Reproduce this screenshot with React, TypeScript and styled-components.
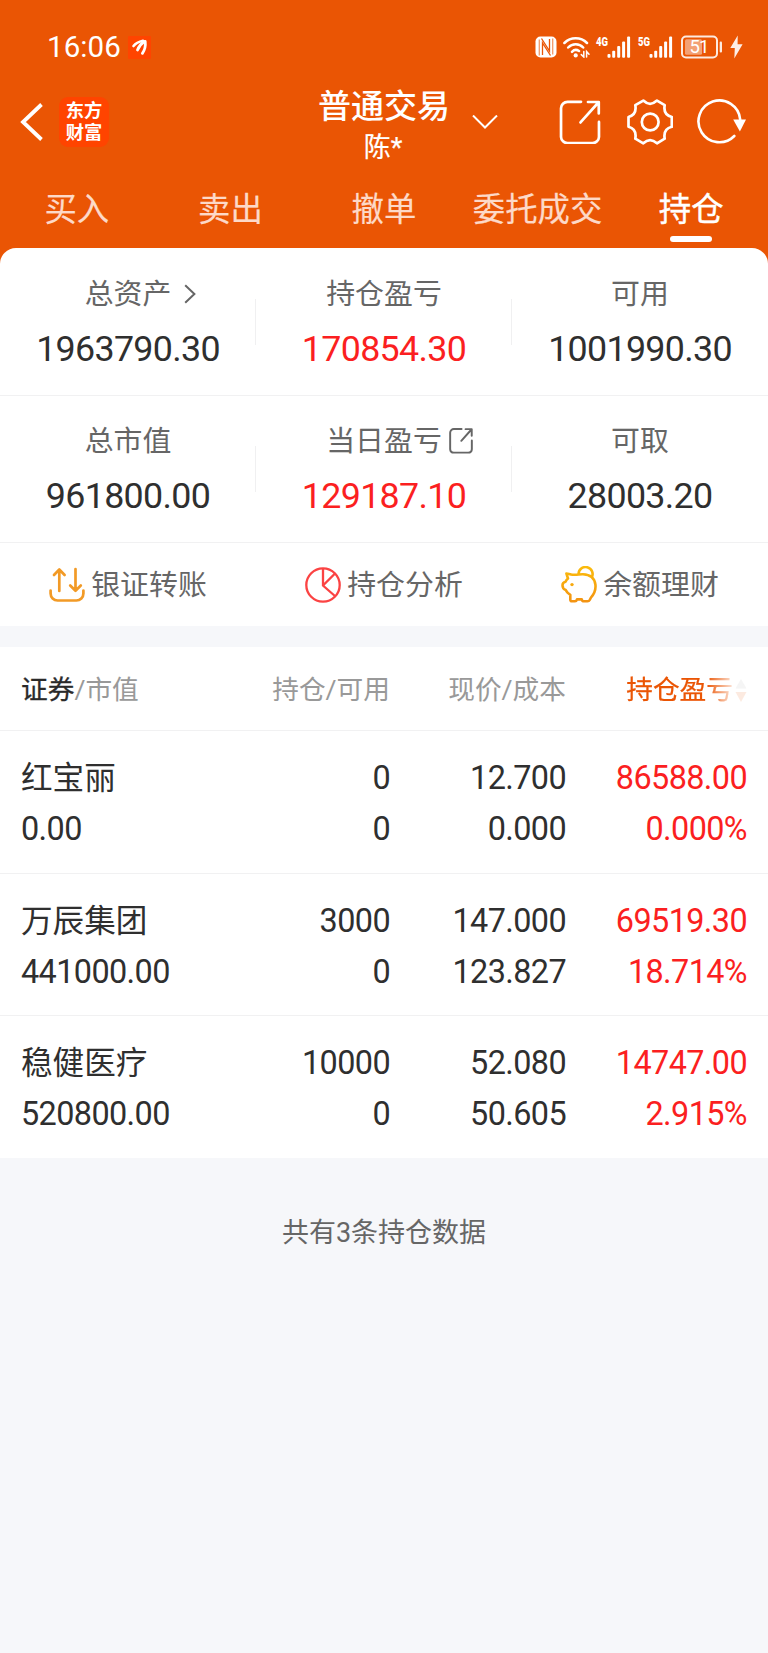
import React from 'react';
import styled, { createGlobalStyle } from 'styled-components';

const GlobalStyle = createGlobalStyle`
  * { box-sizing: border-box; }
  body {
    margin: 0;
    background: #f6f7fa;
    font-family: Roboto, "Noto Sans CJK SC", sans-serif;
    color: #333;
  }
  svg { display: block; flex: none; }
`;

const Screen = styled.div`
  width: 768px;
  min-height: 1653px;
  background: #f6f7fa;
`;

const Header = styled.header`
  height: 264px;
  background: #ea5504;
  color: #fff;
`;

const StatusBar = styled.div`
  display: flex;
  align-items: center;
  height: 78px;
  padding: 16px 25px 0 47px;
`;

const Clock = styled.span`
  font-size: 29.5px;
  line-height: 40px;
  letter-spacing: 0.1px;
  margin-right: 7px;
`;

const StatusIcons = styled.div`
  display: flex;
  align-items: center;
  margin-left: auto;
`;

const Gap = styled.span<{ $w: number }>`
  flex: none;
  width: ${(p) => p.$w}px;
`;

const NavBar = styled.div`
  display: grid;
  grid-template-columns: 318px 130px 1fr;
  align-items: center;
  height: 88px;
`;

const NavLeft = styled.div`
  display: flex;
  align-items: center;
  padding-left: 20px;
  gap: 16px;
`;

const Logo = styled.div`
  display: flex;
  flex-direction: column;
  align-items: center;
  justify-content: center;
  width: 50px;
  height: 50px;
  padding-bottom: 4px;
  border-radius: 9px;
  background: #ff4400;
  font: 700 18.3px/22px "Noto Sans CJK SC", sans-serif;
`;

const Account = styled.div`
  padding-top: 8px;
  margin-bottom: -2px;
  text-align: center;
  white-space: nowrap;
`;

const AccountTitle = styled.div`
  font-size: 33px;
  font-weight: 500;
  line-height: 42px;
`;

const AccountName = styled.div`
  font-size: 27px;
  line-height: 40px;
  -webkit-text-stroke: 0.2px currentColor;
`;

const NavRight = styled.div`
  display: flex;
  align-items: center;
  padding: 0 20px 0 24px;
`;

const Tabs = styled.nav`
  display: grid;
  grid-template-columns: repeat(5, 1fr);
  height: 82px;
  padding: 22px 0 0;
`;

const Tab = styled.div<{ $active?: boolean }>`
  display: flex;
  flex-direction: column;
  align-items: center;
  font-size: 32.4px;
  line-height: 44px;
  white-space: nowrap;
  -webkit-text-stroke: ${(p) => (p.$active ? '0.4px' : '0.2px')} currentColor;
  color: ${(p) => (p.$active ? '#fff' : '#fdd9c8')};
`;

const Indicator = styled.span`
  width: 42px;
  height: 6px;
  margin-top: 4px;
  border-radius: 3px;
  background: #fff;
`;

const Summary = styled.section`
  margin-top: -16px;
  border-radius: 16px 16px 0 0;
  background: #fff;
`;

const StatRow = styled.div`
  display: grid;
  grid-template-columns: repeat(3, 1fr);
  height: 147px;
  box-shadow: 0 1px 0 #f1f1f2;
`;

const Stat = styled.div`
  display: flex;
  flex-direction: column;
  align-items: center;
  padding-top: 26px;
  background: linear-gradient(#f0f0f1, #f0f0f1) right 51px / 1px 46px no-repeat;
  &:last-child { background: none; }
`;

const StatLabel = styled.div`
  display: flex;
  align-items: center;
  position: relative;
  font-size: 28.9px;
  line-height: 40px;
  color: #666;
`;

const LabelMark = styled.span<{ $left: number }>`
  position: absolute;
  left: calc(100% + ${(p) => p.$left}px);
`;

const StatValue = styled.div<{ $up?: boolean }>`
  margin-top: 13px;
  font-size: 35.8px;
  letter-spacing: -0.68px;
  line-height: 44px;
  color: ${(p) => (p.$up ? '#fb1f21' : '#2f2f2f')};
`;

const Actions = styled.div`
  display: grid;
  grid-template-columns: repeat(3, 1fr);
  height: 84px;
  padding-top: 1px;
`;

const Action = styled.div`
  display: flex;
  align-items: center;
  justify-content: center;
  gap: 6px;
  font-size: 28.9px;
  line-height: 40px;
  color: #666;
`;

const Holdings = styled.section`
  margin-top: 21px;
  background: #fff;
`;

const TableRow = styled.div`
  display: grid;
  grid-template-columns: 193px 176px 176px 181px;
  padding: 22px 21px 0;
  height: 142.5px;
  border-bottom: 1px solid #f1f1f2;
  &:last-child { border-color: transparent; height: 142px; }
`;

const TableHead = styled(TableRow)`
  height: 84px;
  padding-top: 22.5px;
  align-items: start;
  font-size: 26.7px;
  line-height: 40px;
  color: #999;
`;

const HeadCell = styled.div<{ $left?: boolean }>`
  text-align: ${(p) => (p.$left ? 'left' : 'right')};
  white-space: nowrap;
`;

const Strong = styled.span`
  color: #2a2a2a;
  -webkit-text-stroke: 0.3px currentColor;
`;

const SortCell = styled.div`
  display: flex;
  align-items: center;
  justify-content: flex-end;
  gap: 2px;
  color: #ea5504;
  -webkit-text-stroke: 0.25px currentColor;
  mask-image: linear-gradient(to right, #000 140px, rgba(0, 0, 0, 0.12) 168px);
`;

const Cell = styled.div<{ $up?: boolean }>`
  text-align: right;
  color: ${(p) => (p.$up ? '#fb1f21' : '#2f2f2f')};
  font-size: 32.4px;
  letter-spacing: -0.6px;
  line-height: 51px;
  white-space: nowrap;
`;

const NameCell = styled(Cell)`
  text-align: left;
`;

const StockName = styled.div`
  height: 51px;
  font-size: 31.6px;
  letter-spacing: 0;
  line-height: 51px;
`;

const Footnote = styled.p`
  margin: 55px 0 0;
  text-align: center;
  font-size: 27px;
  line-height: 40px;
  color: #666;
`;

const AppBadge = () => (
  <svg width="23" height="23" viewBox="0 0 23 23">
    <rect width="23" height="23" rx="1" fill="#ff4400" />
    <g fill="none" stroke="#fff" strokeLinecap="round">
      <path d="M5.500 10Q8.500 6.200 15 4.800" strokeWidth="2.600" />
      <path d="M9.500 14Q11.500 8.800 16.200 5.500" strokeWidth="2.800" />
      <path d="M14.400 17.300Q18 12.500 17.200 5.500" strokeWidth="2.800" />
    </g>
  </svg>
);

const NfcIcon = () => (
  <svg width="22" height="22" viewBox="0 0 22 22">
    <rect x="0.500" y="0.500" width="21" height="21" rx="5" fill="#fff" />
    <g fill="none" stroke="#ea5504" strokeWidth="1.300">
      <path d="M4.300 19.500V3.500M17.700 2.500V18.500" opacity="0.600" />
      <path d="M7.500 19V7L15.500 19.500M14.500 3V15L6.500 2.500" />
    </g>
  </svg>
);

const WifiIcon = () => (
  <svg width="27" height="22" viewBox="0 0 27 22" fill="none" stroke="#fff" strokeWidth="2.500" strokeLinecap="round">
    <path d="M1.400 7A16 16 0 0 1 24 7M5.200 11.500A10.500 10.500 0 0 1 20.200 11.500M9 15.800A5.500 5.500 0 0 1 16 15" />
    <circle cx="12.700" cy="19.400" r="2.100" fill="#fff" stroke="none" />
    <path d="M20.800 15.500V21L18.300 18.600M23.600 21V15.500L26 18.200" strokeWidth="1.500" />
  </svg>
);

const Signal = ({ label }: { label: string }) => (
  <svg width="35" height="23" viewBox="0 0 35 23" fill="#fff" overflow="visible">
    <text x="0" y="9.800" fontSize="13" fontWeight="900" fontFamily="Roboto, sans-serif" textLength="12" lengthAdjust="spacingAndGlyphs">
      {label}
    </text>
    <rect x="11.500" y="18" width="3" height="3.800" rx="1" />
    <rect x="16.200" y="14.800" width="3" height="7" rx="1" />
    <rect x="21.200" y="10" width="3" height="11.800" rx="1" />
    <rect x="26.100" y="5.500" width="3" height="16.300" rx="1" />
    <rect x="31.100" y="0.500" width="3" height="21.300" rx="1" />
  </svg>
);

const BatteryIcon = () => (
  <svg width="42" height="24" viewBox="0 0 42 24">
    <rect x="1" y="1.500" width="35" height="21" rx="4" fill="none" stroke="#fff" strokeOpacity="0.880" strokeWidth="2" />
    <rect x="4" y="4.300" width="17" height="15.400" rx="1.500" fill="#fff" opacity="0.450" />
    <rect x="38.700" y="6.500" width="2.300" height="11" rx="1" fill="#fff" opacity="0.880" />
    <text x="18" y="18.400" fontSize="18.500" fontFamily="Roboto, sans-serif" fill="#fff" textAnchor="middle" letterSpacing="-0.800">51</text>
  </svg>
);

const BoltIcon = () => (
  <svg width="13" height="24" viewBox="0 0 13 24">
    <path d="M7.700 0.500L0.300 13H4.800L4.300 23.500L12.600 9.200H7.600Z" fill="#fff" opacity="0.900" />
  </svg>
);

const BackIcon = () => (
  <svg width="23" height="38" viewBox="0 0 23 38" fill="none" stroke="#fff" strokeWidth="3.800">
    <path d="M21.500 1.500L3 19L21.500 36.500" />
  </svg>
);

const ChevronDown = () => (
  <svg width="26" height="15" viewBox="0 0 26 15" fill="none" stroke="#fff" strokeWidth="2">
    <path d="M1 0.500L13 12.500L25 0.500" />
  </svg>
);

const ExportIcon = ({ size, weight }: { size: number; weight: number }) => (
  <svg width={size} height={size * 1.07} viewBox="0 0 42 45" fill="none" stroke="currentColor" strokeWidth={weight} strokeLinecap="round" strokeLinejoin="round">
    <path d="M22 1.800H8.500A6.500 6.500 0 0 0 2 8.300V37A6.500 6.500 0 0 0 8.500 43.200H33.500A6.500 6.500 0 0 0 40 37V22" />
    <path d="M29 2H39.800V13.500M38.500 3.500L21.500 22.500" />
  </svg>
);

const GearIcon = () => (
  <svg width="46" height="46" viewBox="0 0 46 46" fill="none" stroke="#fff" strokeWidth="2.700" strokeLinejoin="round">
    <path d="M16.300 1.600Q23 8 30 1.600L37.700 6.200Q36 15.500 44.800 18V27.800Q36 30 37.700 39.700L30 44.300Q23 38 16.300 44.300L8.300 39.700Q10 30 1.500 27.800V18Q10 15.500 8.300 6.200Z" />
    <circle cx="23.200" cy="23" r="8.400" />
  </svg>
);

const RefreshIcon = () => (
  <svg width="50" height="46" viewBox="0 0 50 46" fill="none" stroke="#fff" strokeWidth="2.600" strokeLinecap="round">
    <path d="M37.300 37A20.900 20.900 0 1 1 43.200 20.500" />
    <path d="M36.200 20.500H49L42.900 32.500Z" fill="#fff" stroke="none" />
  </svg>
);

const ChevronRight = () => (
  <svg width="12" height="20" viewBox="0 0 12 20" fill="none" stroke="#666" strokeWidth="2">
    <path d="M1.200 1.200L10.400 10L1.200 18.800" />
  </svg>
);

const TransferIcon = () => (
  <svg width="36" height="36" viewBox="0 0 36 36" fill="none" stroke="#f29a26" strokeWidth="2.700" strokeLinecap="round" strokeLinejoin="round">
    <path d="M10.300 24V2.500M5 8L10.300 2.500L15.600 8M26.500 2V23.500M21.200 18.500L26.500 23.800L31.800 18.500" />
    <path d="M1.600 23.500V26.500A7 7 0 0 0 8.600 33.500H27.400A7 7 0 0 0 34.400 26.500V23.500" />
  </svg>
);

const PieIcon = () => (
  <svg width="36" height="36" viewBox="0 0 36 36" fill="none" stroke="#fb4343" strokeWidth="2.300">
    <circle cx="18" cy="18" r="16.700" />
    <path d="M18 1.500V18.500L30.500 29.500M18 18.500L30 6.500" />
  </svg>
);

const PiggyIcon = () => (
  <svg width="36" height="37" viewBox="0 0 36 37" fill="none" stroke="url(#gold)" strokeWidth="2.600" strokeLinejoin="round">
    <defs>
      <linearGradient id="gold" x1="0" y1="0" x2="0" y2="37" gradientUnits="userSpaceOnUse">
        <stop offset="0" stopColor="#fbbc0b" />
        <stop offset="1" stopColor="#f39212" />
      </linearGradient>
    </defs>
    <path d="M9.800 8.400C8.300 8.300 7 7.500 5.400 7.600L7 12.500C5.800 13.500 5 14.600 4.500 15.800C2.500 16.300 1.500 17.300 1.500 19.200C1.500 22 2.500 23.200 4.700 24C5.500 26.200 7.300 27.500 9.300 28.800V33.500Q9.300 35.300 11 35.300H14Q15.500 35.300 16 33.400H20.800Q21.200 35.300 23 35.300H26.500Q28 35.300 28.700 34L30 31.500C33.500 27.500 35 23.500 34.400 18.500C33.500 12 28.500 8.600 22 8.300C18.500 8.100 14.500 9.400 9.800 8.400Z" />
    <path d="M17.600 8.200A7 7 0 1 1 30.700 11.500" />
    <circle cx="11" cy="18.600" r="1.700" fill="#f7a90e" stroke="none" />
  </svg>
);

const SortIcon = () => (
  <svg width="12" height="26" viewBox="0 0 12 26">
    <path d="M6 2L11.500 11.500H0.500Z" fill="#aaa" />
    <path d="M6 25L11.500 15H0.500Z" fill="#ea5504" />
  </svg>
);

const holdings = [
  { name: '红宝丽', value: '0.00', held: '0', free: '0', price: '12.700', cost: '0.000', profit: '86588.00', rate: '0.000%' },
  { name: '万辰集团', value: '441000.00', held: '3000', free: '0', price: '147.000', cost: '123.827', profit: '69519.30', rate: '18.714%' },
  { name: '稳健医疗', value: '520800.00', held: '10000', free: '0', price: '52.080', cost: '50.605', profit: '14747.00', rate: '2.915%' },
];

export default function App() {
  return (
    <Screen>
      <GlobalStyle />
      <Header>
        <StatusBar>
          <Clock>16:06</Clock>
          <AppBadge />
          <StatusIcons>
            <NfcIcon />
            <Gap $w={6} />
            <WifiIcon />
            <Gap $w={6} />
            <Signal label="4G" />
            <Gap $w={7} />
            <Signal label="5G" />
            <Gap $w={8} />
            <BatteryIcon />
            <Gap $w={7} />
            <BoltIcon />
          </StatusIcons>
        </StatusBar>
        <NavBar>
          <NavLeft>
            <BackIcon />
            <Logo>
              <span>东方</span>
              <span>财富</span>
            </Logo>
          </NavLeft>
          <Account>
            <AccountTitle>普通交易</AccountTitle>
            <AccountName>陈*</AccountName>
          </Account>
          <NavRight>
            <ChevronDown />
            <Gap $w={61} />
            <ExportIcon size={42} weight={2.7} />
            <Gap $w={26} />
            <GearIcon />
            <Gap $w={24} />
            <RefreshIcon />
          </NavRight>
        </NavBar>
        <Tabs>
          <Tab>买入</Tab>
          <Tab>卖出</Tab>
          <Tab>撤单</Tab>
          <Tab>委托成交</Tab>
          <Tab $active>
            持仓
            <Indicator />
          </Tab>
        </Tabs>
      </Header>
      <Summary>
        <StatRow>
          <Stat>
            <StatLabel>
              总资产
              <LabelMark $left={13}><ChevronRight /></LabelMark>
            </StatLabel>
            <StatValue>1963790.30</StatValue>
          </Stat>
          <Stat>
            <StatLabel>持仓盈亏</StatLabel>
            <StatValue $up>170854.30</StatValue>
          </Stat>
          <Stat>
            <StatLabel>可用</StatLabel>
            <StatValue>1001990.30</StatValue>
          </Stat>
        </StatRow>
        <StatRow>
          <Stat>
            <StatLabel>总市值</StatLabel>
            <StatValue>961800.00</StatValue>
          </Stat>
          <Stat>
            <StatLabel>
              当日盈亏
              <LabelMark $left={7}><ExportIcon size={24} weight={3.4} /></LabelMark>
            </StatLabel>
            <StatValue $up>129187.10</StatValue>
          </Stat>
          <Stat>
            <StatLabel>可取</StatLabel>
            <StatValue>28003.20</StatValue>
          </Stat>
        </StatRow>
        <Actions>
          <Action><TransferIcon />银证转账</Action>
          <Action><PieIcon />持仓分析</Action>
          <Action><PiggyIcon />余额理财</Action>
        </Actions>
      </Summary>
      <Holdings>
        <TableHead>
          <HeadCell $left><Strong>证券</Strong>/市值</HeadCell>
          <HeadCell>持仓/可用</HeadCell>
          <HeadCell>现价/成本</HeadCell>
          <SortCell>持仓盈亏<SortIcon /></SortCell>
        </TableHead>
        {holdings.map((h) => (
          <TableRow key={h.name}>
            <NameCell>
              <StockName>{h.name}</StockName>
              {h.value}
            </NameCell>
            <Cell>{h.held}<br />{h.free}</Cell>
            <Cell>{h.price}<br />{h.cost}</Cell>
            <Cell $up>{h.profit}<br />{h.rate}</Cell>
          </TableRow>
        ))}
      </Holdings>
      <Footnote>共有3条持仓数据</Footnote>
    </Screen>
  );
}
